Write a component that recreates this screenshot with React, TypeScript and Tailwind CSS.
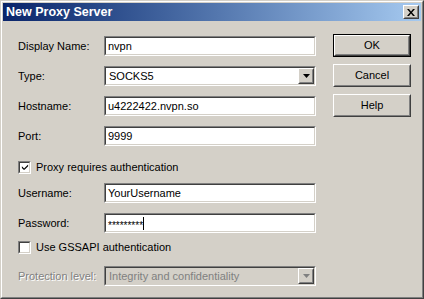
import React from 'react';

// Win2000 classic palette
// face #d4d0c8, shadow #808080, dark shadow #404040, highlight #ffffff

const Sunken: React.FC<{ className?: string; children?: React.ReactNode }> = ({ className = '', children }) => (
  <div className={`border border-t-[#808080] border-l-[#808080] border-b-white border-r-white ${className}`}>
    <div className="h-full w-full border border-t-[#404040] border-l-[#404040] border-b-[#d4d0c8] border-r-[#d4d0c8] flex items-center">
      {children}
    </div>
  </div>
);

const Raised: React.FC<{ className?: string; children?: React.ReactNode }> = ({ className = '', children }) => (
  <div className={`border border-t-white border-l-white border-b-[#404040] border-r-[#404040] bg-[#d4d0c8] ${className}`}>
    <div className="h-full w-full border border-t-[#d4d0c8] border-l-[#d4d0c8] border-b-[#808080] border-r-[#808080] flex items-center justify-center">
      {children}
    </div>
  </div>
);

const DownArrow = ({ color = '#000' }: { color?: string }) => (
  <svg width="7" height="4" viewBox="0 0 7 4">
    <path d="M0 0h7L3.5 4z" fill={color} />
  </svg>
);

const TextField = ({ value }: { value: string }) => (
  <Sunken className="w-[212px] h-[20px] bg-white">
    <span className="pl-[2px] text-black leading-none">{value}</span>
  </Sunken>
);

const ComboBox = ({ value, disabled = false }: { value: string; disabled?: boolean }) => (
  <Sunken className={`w-[212px] h-[20px] ${disabled ? 'bg-[#d4d0c8]' : 'bg-white'}`}>
    <span className={`flex-1 pl-[3px] leading-none ${disabled ? 'text-[#808080]' : 'text-black'}`}>{value}</span>
    <Raised className="w-[16px] h-[16px]">
      <DownArrow color={disabled ? '#808080' : '#000'} />
    </Raised>
  </Sunken>
);

const Checkbox = ({ checked }: { checked: boolean }) => (
  <Sunken className="w-[13px] h-[13px] bg-white">
    {checked && (
      <svg width="9" height="9" viewBox="0 0 9 9" className="ml-[1px]">
        <path d="M1 3v2l2 2h1l4-4V1L3.5 5.5z" fill="#000" />
      </svg>
    )}
  </Sunken>
);

const Row = ({ label, children, className = '', disabled = false }: { label: string; children: React.ReactNode; className?: string; disabled?: boolean }) => (
  <div className={`flex items-center h-[20px] ${className}`}>
    <span
      className={`w-[86px] ${disabled ? 'text-[#808080] [text-shadow:1px_1px_0_#fff]' : 'text-black'}`}
    >
      {label}
    </span>
    {children}
  </div>
);

const Button = ({ label, isDefault = false, className = '' }: { label: string; isDefault?: boolean; className?: string }) =>
  isDefault ? (
    <div className={`w-[78px] h-[23px] border border-black ${className}`}>
      <Raised className="w-full h-full">
        <span className="text-black">{label}</span>
      </Raised>
    </div>
  ) : (
    <Raised className={`w-[78px] h-[23px] ${className}`}>
      <span className="text-black">{label}</span>
    </Raised>
  );

export default function App() {
  return (
    <div className="w-[424px] h-[299px] font-['Liberation_Sans',Arial,sans-serif] text-[11px]">
      <div className="w-full h-full border border-t-[#d4d0c8] border-l-[#d4d0c8] border-b-[#404040] border-r-[#404040]">
        <div className="w-full h-full border border-t-white border-l-white border-b-[#808080] border-r-[#808080] bg-[#d4d0c8] p-px flex flex-col">
          {/* title bar */}
          <div className="h-[18px] flex items-center justify-between bg-gradient-to-r from-[#0a246a] to-[#a6caf0] pl-[3px] pr-[2px]">
            <span className="text-white font-bold text-[12.5px] leading-none">New Proxy Server</span>
            <Raised className="w-[16px] h-[14px]">
              <svg width="8" height="7" viewBox="0 0 8 7">
                <path d="M0 0h2l2 2.5L6 0h2L5 3.5 8 7H6L4 4.5 2 7H0l3-3.5z" fill="#000" />
              </svg>
            </Raised>
          </div>

          {/* body */}
          <div className="flex flex-1">
            <div className="flex flex-col pl-[15px] pt-[15px]">
              <Row label="Display Name:">
                <TextField value="nvpn" />
              </Row>
              <Row label="Type:" className="mt-[10px]">
                <ComboBox value="SOCKS5" />
              </Row>
              <Row label="Hostname:" className="mt-[10px]">
                <TextField value="u4222422.nvpn.so" />
              </Row>
              <Row label="Port:" className="mt-[10px]">
                <TextField value="9999" />
              </Row>
              <div className="flex items-center gap-[5px] mt-[15px] h-[13px]">
                <Checkbox checked />
                <span className="text-black">Proxy requires authentication</span>
              </div>
              <Row label="Username:" className="mt-[9px]">
                <TextField value="YourUsername" />
              </Row>
              <Row label="Password:" className="mt-[10px]">
                <Sunken className="w-[212px] h-[20px] bg-white">
                  <span className="pl-[2px] text-black text-[10px] leading-none relative top-[3px]">*********</span>
                  <span className="w-px h-[13px] bg-black" />
                </Sunken>
              </Row>
              <div className="flex items-center gap-[5px] mt-[8px] h-[13px]">
                <Checkbox checked={false} />
                <span className="text-black">Use GSSAPI authentication</span>
              </div>
              <Row label="Protection level:" className="mt-[12px]" disabled>
                <ComboBox value="Integrity and confidentiality" disabled />
              </Row>
            </div>

            <div className="flex flex-col gap-[7px] pt-[13px] ml-[17px]">
              <Button label="OK" isDefault />
              <Button label="Cancel" />
              <Button label="Help" />
            </div>
          </div>
        </div>
      </div>
    </div>
  );
}
